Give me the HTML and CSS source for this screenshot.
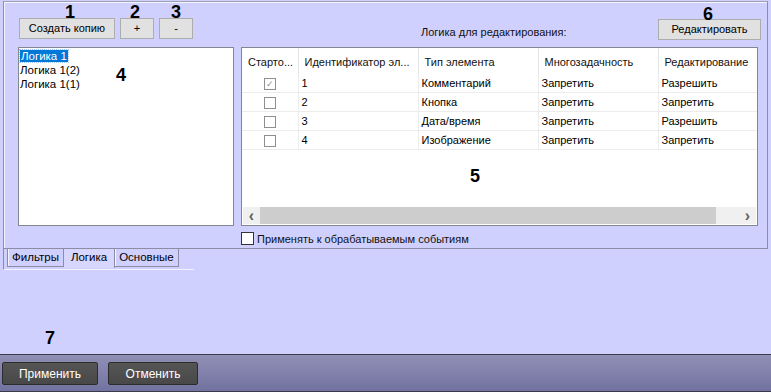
FILE: index.html
```html
<!DOCTYPE html>
<html lang="ru">
<head>
    <meta charset="UTF-8">
    <title>Логика</title>
    <link rel="stylesheet" href="styles.css">
</head>
<body>

<div class="screen">

    <div class="panel">
        <!-- Toolbar -->
        <div class="toolbar">
            <button class="btn btn-copy">Создать копию</button>
            <button class="btn btn-small">+</button>
            <button class="btn btn-small">-</button>
            <span class="edit-label">Логика для редактирования:</span>
            <button class="btn btn-edit">Редактировать</button>
        </div>

        <div class="content">
            <!-- Logic list -->
            <div class="logic-list">
                <div class="item"><span class="selected">Логика 1</span></div>
                <div class="item">Логика 1(2)</div>
                <div class="item">Логика 1(1)</div>
            </div>

            <div class="right-side">
                <!-- Elements table -->
                <div class="grid-box">
                    <div class="grid-scroll">
                        <table class="grid">
                            <colgroup>
                                <col style="width:56px">
                                <col style="width:120px">
                                <col style="width:120px">
                                <col style="width:120px">
                                <col style="width:120px">
                            </colgroup>
                            <thead>
                                <tr>
                                    <th>Старто...</th>
                                    <th>Идентификатор эл...</th>
                                    <th>Тип элемента</th>
                                    <th>Многозадачность</th>
                                    <th>Редактирование</th>
                                </tr>
                            </thead>
                            <tbody>
                                <tr>
                                    <td class="chk-cell"><span class="cb checked">&#10003;</span></td>
                                    <td>1</td><td>Комментарий</td><td>Запретить</td><td>Разрешить</td>
                                </tr>
                                <tr>
                                    <td class="chk-cell"><span class="cb"></span></td>
                                    <td>2</td><td>Кнопка</td><td>Запретить</td><td>Запретить</td>
                                </tr>
                                <tr>
                                    <td class="chk-cell"><span class="cb"></span></td>
                                    <td>3</td><td>Дата/время</td><td>Запретить</td><td>Разрешить</td>
                                </tr>
                                <tr>
                                    <td class="chk-cell"><span class="cb"></span></td>
                                    <td>4</td><td>Изображение</td><td>Запретить</td><td>Запретить</td>
                                </tr>
                            </tbody>
                        </table>
                    </div>
                    <div class="hscroll">
                        <span class="arrow">&lsaquo;</span>
                        <span class="track"><span class="thumb"></span></span>
                        <span class="arrow">&rsaquo;</span>
                    </div>
                </div>

                <label class="apply-row">
                    <span class="cb-big"></span>
                    Применять к обрабатываемым событиям
                </label>
            </div>
        </div>
    </div>

    <!-- Tabs -->
    <div class="tabs">
        <span class="tab">Фильтры</span>
        <span class="tab active">Логика</span>
        <span class="tab">Основные</span>
        <span class="tabs-rest"></span>
    </div>

    <!-- Callout numbers -->
    <span class="mark m1">1</span>
    <span class="mark m2">2</span>
    <span class="mark m3">3</span>
    <span class="mark m4">4</span>
    <span class="mark m5">5</span>
    <span class="mark m6">6</span>
    <span class="mark m7">7</span>
</div>

<div class="footer">
    <button class="dark-btn">Применить</button>
    <button class="dark-btn">Отменить</button>
</div>

</body>
</html>
```

FILE: styles.css
```css
body {
    margin: 0;
    background: #d0d0fe;
    font-family: "Liberation Sans", Arial, sans-serif;
    font-size: 11px;
    color: #000;
}

.screen {
    position: relative;
    height: 354px;
    padding-top: 1px;
    box-sizing: border-box;
}

.panel {
    margin: 0 3px 0 3px;
    height: 248px;
    box-sizing: border-box;
    border: 1px solid #8c8ca4;
    border-top-color: #a0a0b4;
    box-shadow: inset 1px 1px 0 #f4f4ff;
    padding: 15px 9px 0 14px;
}

/* Toolbar */
.toolbar {
    display: flex;
    align-items: center;
    height: 22px;
}

.btn {
    font-family: "Liberation Sans", Arial, sans-serif;
    font-size: 11px;
    height: 21px;
    background: #e1e1e1;
    border: 1px solid #adadad;
    padding: 0;
    color: #000;
}

.btn-copy {
    width: 96px;
    margin-left: 1px;
}

.btn-small {
    width: 34px;
    margin-left: 5px;
}

.edit-label {
    margin-left: 228px;
    padding-top: 8px;
    color: #111;
}

.btn-edit {
    width: 103px;
    margin-left: auto;
    margin-right: -3px;
    position: relative;
    top: 1px;
}

.content {
    display: flex;
    margin-top: 8px;
}

/* Logic list */
.logic-list {
    width: 216px;
    height: 179px;
    box-sizing: border-box;
    background: #fff;
    border: 1px solid #828790;
    padding: 1px 1px;
}

.item {
    height: 14px;
    line-height: 14px;
    font-size: 11.5px;
}

.selected {
    background: #0078d7;
    color: #fff;
    padding: 0 1px 0 1px;
    outline: 1px dotted #a0c8ff;
}

.right-side {
    margin-left: 7px;
    flex: 1;
}

/* Element table */
.grid-box {
    width: 517px;
    height: 179px;
    box-sizing: border-box;
    background: #fff;
    border: 1px solid #828790;
    display: flex;
    flex-direction: column;
}

.grid-scroll {
    flex: 1;
    overflow: hidden;
}

.grid {
    border-collapse: collapse;
    table-layout: fixed;
    width: 536px;
}

.grid th {
    height: 24px;
    padding: 2px 0 0 6px;
    font-weight: normal;
    text-align: left;
    white-space: nowrap;
    overflow: hidden;
    border-right: 1px solid #e5e5e5;
    color: #111;
}

.grid td {
    height: 18px;
    padding: 0 0 0 3px;
    border-right: 1px solid #ececec;
    border-bottom: 1px solid #ececec;
    white-space: nowrap;
    overflow: hidden;
}

.grid td.chk-cell {
    padding: 0;
    text-align: center;
}

.cb {
    display: inline-block;
    width: 10px;
    height: 10px;
    border: 1px solid #8f8f8f;
    background: #fff;
    vertical-align: middle;
    font-size: 9px;
    line-height: 10px;
    color: #8f8f8f;
    text-align: center;
}

.hscroll {
    display: flex;
    align-items: center;
    height: 17px;
    background: #f0f0f0;
    margin: 0 1px 1px 1px;
}

.arrow {
    width: 17px;
    text-align: center;
    font-size: 16px;
    font-weight: bold;
    color: #606060;
    line-height: 17px;
}

.track {
    flex: 1;
    height: 17px;
    display: flex;
}

.thumb {
    width: 456px;
    height: 17px;
    background: #cdcdcd;
}

.apply-row {
    display: flex;
    align-items: center;
    gap: 3px;
    margin-top: 6px;
    margin-left: 0;
    color: #111;
}

.cb-big {
    width: 11px;
    height: 11px;
    border: 1px solid #333;
    background: #fff;
}

/* Tabs */
.tabs {
    display: flex;
    margin-left: 3px;
    height: 20px;
    border-left: 1px solid #8c8ca4;
    border-bottom: 1px solid #f2f2ff;
    width: 187px;
    padding-left: 3px;
}

.tab {
    font-size: 11.5px;
    height: 17px;
    line-height: 16px;
    padding: 0 4px;
    border: 1px solid #8c8ca4;
    border-top: none;
    box-shadow: inset 1px 0 0 #f4f4ff;
    color: #000;
}

.tab.active {
    border: none;
    height: 19px;
    padding: 0 7px;
    background: #d6d6fe;
    box-shadow: 1px 0 0 #8c8ca4;
}

.tabs-rest {
    flex: 1;
}

/* Callouts */
.mark {
    position: absolute;
    font-size: 18px;
    font-weight: bold;
    color: #000;
    line-height: 18px;
}

.m1 { left: 65px;  top: 3px; }
.m2 { left: 130px; top: 3px; }
.m3 { left: 171px; top: 3px; }
.m4 { left: 116px; top: 66px; }
.m5 { left: 470px; top: 167px; }
.m6 { left: 703px; top: 5px; }
.m7 { left: 45px;  top: 329px; }

/* Footer */
.footer {
    height: 38px;
    box-sizing: border-box;
    border-top: 1px solid #3a3a4c;
    border-bottom: 1px solid #3a3a4c;
    background: linear-gradient(#9090b6, #7272a0);
    display: flex;
    align-items: center;
    gap: 10px;
    padding: 1px 0 0 2px;
}

.dark-btn {
    width: 96px;
    height: 23px;
    background: linear-gradient(#555, #484848);
    border: 1px solid #2c2c2c;
    border-radius: 2px;
    color: #fff;
    font-family: "Liberation Sans", Arial, sans-serif;
    font-size: 12px;
    font-weight: normal;
    padding: 0;
}

.dark-btn + .dark-btn {
    width: 90px;
}
```
